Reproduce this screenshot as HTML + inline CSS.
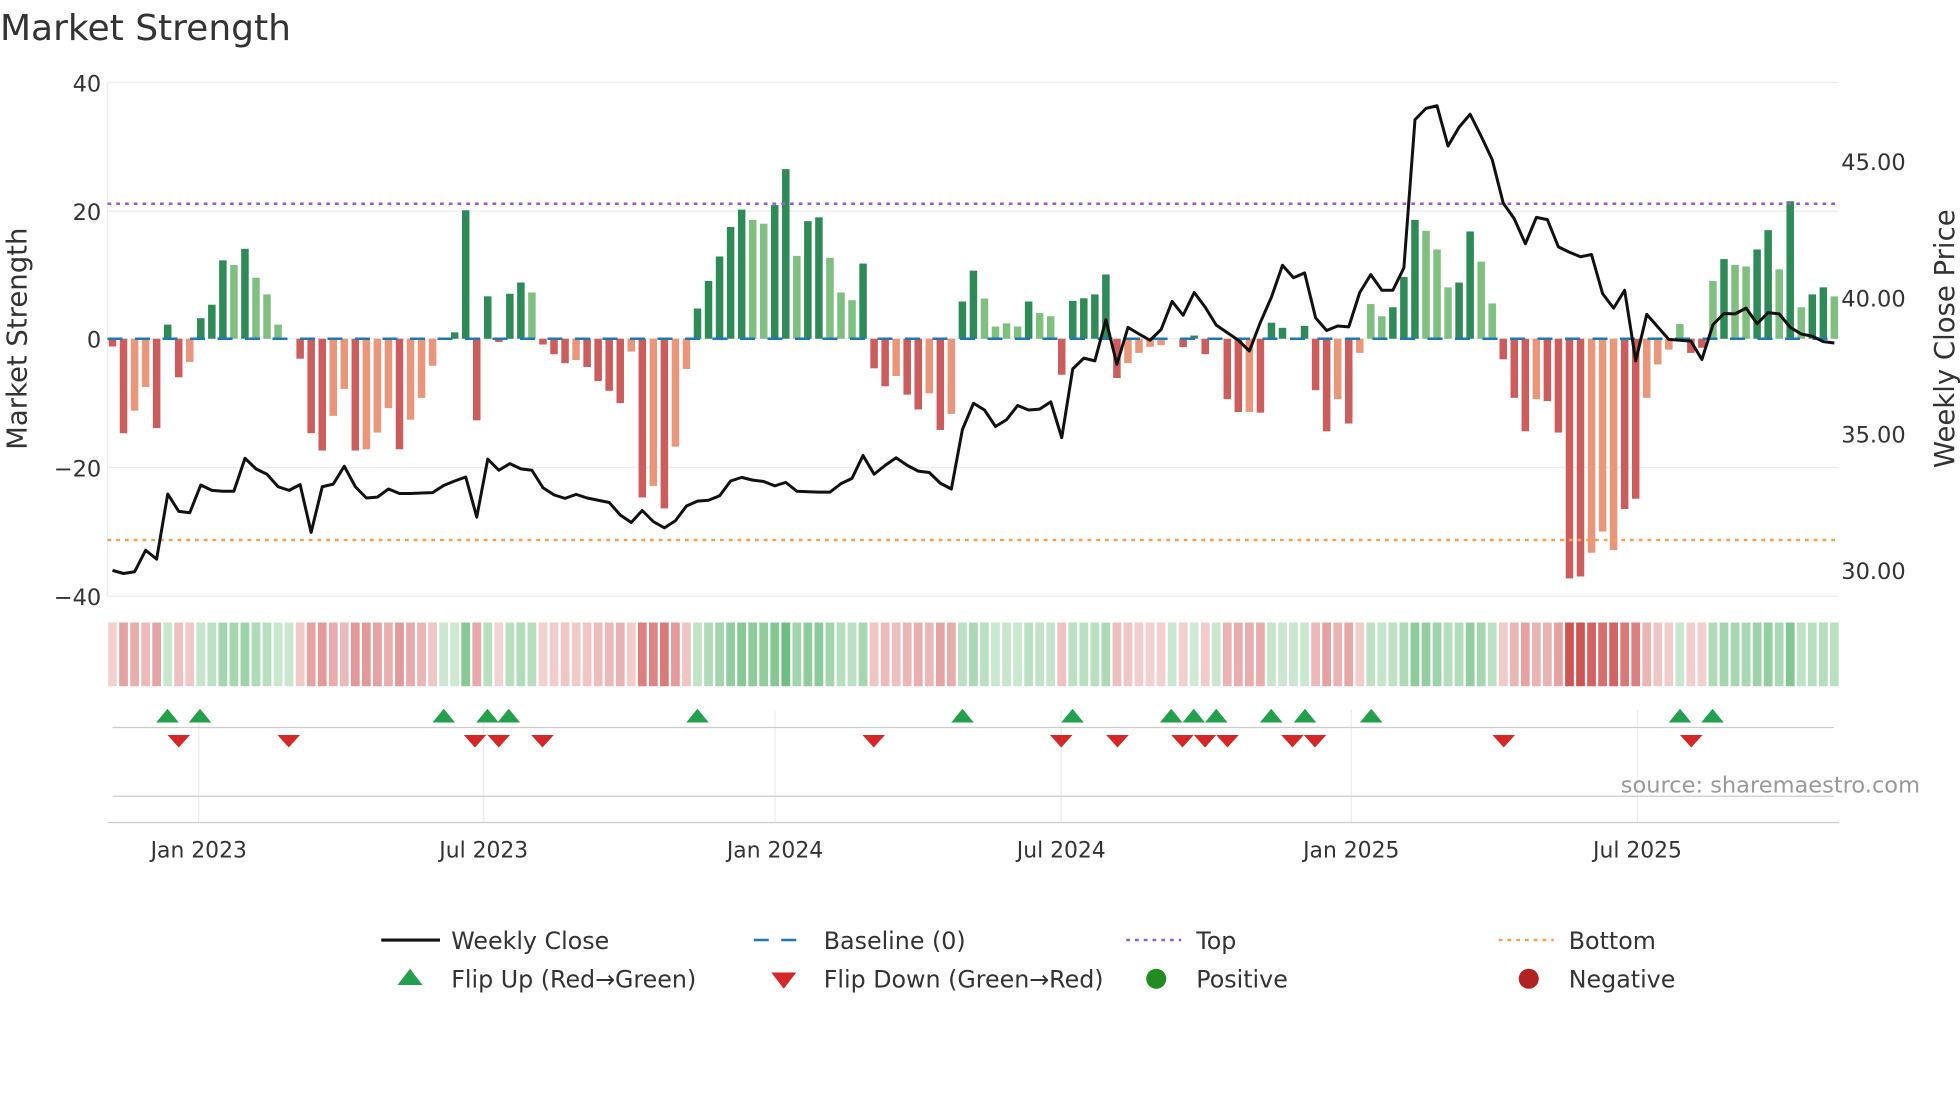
<!DOCTYPE html>
<html><head><meta charset="utf-8"><style>
html,body{margin:0;padding:0;background:#fff;width:1960px;height:1102px;overflow:hidden}
svg{display:block}
text{font-family:"DejaVu Sans","Liberation Sans",sans-serif;fill:#333}
</style></head><body>
<svg id="s" width="1960" height="1102" viewBox="0 0 1568 881.6" xmlns="http://www.w3.org/2000/svg">
<text x="0" y="32" font-size="28.8" fill="#333">Market Strength</text>
<g stroke="#ececec" stroke-width="1">
<line x1="86" x2="1471" y1="66" y2="66"/><line x1="86" x2="1471" y1="169" y2="169"/><line x1="86" x2="1471" y1="271" y2="271"/><line x1="86" x2="1471" y1="374" y2="374"/><line x1="86" x2="1471" y1="477" y2="477"/>
<line x1="86" x2="86" y1="66" y2="477"/>
<line x1="159" x2="159" y1="568" y2="658"/><line x1="387" x2="387" y1="568" y2="658"/><line x1="620" x2="620" y1="568" y2="658"/><line x1="849" x2="849" y1="568" y2="658"/><line x1="1081" x2="1081" y1="568" y2="658"/><line x1="1310" x2="1310" y1="568" y2="658"/>
</g>
<line x1="90" x2="1467" y1="582" y2="582" stroke="#ccc"/>
<line x1="90" x2="1467" y1="637" y2="637" stroke="#ccc"/>
<line x1="86" x2="1471" y1="658" y2="658" stroke="#ccc"/>
<g font-size="18" text-anchor="end">
<text x="81" y="73">40</text><text x="81" y="176">20</text><text x="81" y="278">0</text><text x="81" y="381">−20</text><text x="81" y="484">−40</text>
</g>
<g font-size="18">
<text x="1473" y="136">45.00</text><text x="1473" y="245">40.00</text><text x="1473" y="354">35.00</text><text x="1473" y="463">30.00</text>
</g>
<text font-size="22" transform="translate(21,271) rotate(-90)" text-anchor="middle">Market Strength</text>
<text font-size="22" transform="translate(1563,271) rotate(-90)" text-anchor="middle">Weekly Close Price</text>
<g id="bars"></g>
<line x1="86" x2="1471" y1="271" y2="271" stroke="#1f77b4" stroke-width="2" stroke-dasharray="12,10"/>
<line x1="86" x2="1471" y1="163" y2="163" stroke="#9b59d6" stroke-width="2" stroke-dasharray="3,4"/>
<line x1="86" x2="1471" y1="432" y2="432" stroke="#f0a050" stroke-width="2" stroke-dasharray="3,4"/>
<polyline id="price" fill="none" stroke="#111" stroke-width="2.4" stroke-linejoin="round"/>
<g id="strip"></g>
<g id="flips"></g>
<text x="1536" y="634" font-size="18" text-anchor="end" style="fill:#999">source: sharemaestro.com</text>
<g font-size="17.5" text-anchor="middle">
<text x="159" y="686">Jan 2023</text><text x="387" y="686">Jul 2023</text><text x="620" y="686">Jan 2024</text><text x="849" y="686">Jul 2024</text><text x="1081" y="686">Jan 2025</text><text x="1310" y="686">Jul 2025</text>
</g>
<g font-size="19">
<line x1="305" x2="352" y1="752" y2="752" stroke="#111" stroke-width="2.5"/><text x="361" y="759">Weekly Close</text>
<line x1="603" x2="646" y1="752" y2="752" stroke="#1f77b4" stroke-width="2" stroke-dasharray="12,10"/><text x="659" y="759">Baseline (0)</text>
<line x1="901" x2="945" y1="752" y2="752" stroke="#9b59d6" stroke-width="2" stroke-dasharray="3,4"/><text x="957" y="759">Top</text>
<line x1="1199" x2="1243" y1="752" y2="752" stroke="#f0a050" stroke-width="2" stroke-dasharray="3,4"/><text x="1255" y="759">Bottom</text>
<polygon points="318,788 338,788 328,775" fill="#22a04b"/><text x="361" y="790">Flip Up (Red→Green)</text>
<polygon points="617,778 637,778 627,791" fill="#d62728"/><text x="659" y="790">Flip Down (Green→Red)</text>
<circle cx="925" cy="783" r="8" fill="#228b22"/><text x="957" y="790">Positive</text>
<circle cx="1223" cy="783" r="8" fill="#b22222"/><text x="1255" y="790">Negative</text>
</g>
</svg>
<script>
var v=[-1.2,-14.7,-11.2,-7.5,-13.9,2.2,-6,-3.6,3.2,5.3,12.2,11.5,14,9.5,6.9,2.2,0,-3.1,-14.7,-17.4,-12,-7.8,-17.4,-17.2,-14.6,-10.8,-17.2,-12.6,-9.2,-4.2,0,1,20,-12.7,6.6,-0.5,7,8.75,7.2,-0.9,-2.4,-3.8,-3.3,-4.4,-6.6,-8.1,-10,-2,-24.7,-22.9,-26.4,-16.8,-4.7,4.7,9,12.8,17.4,20.1,18.5,17.9,20.8,26.4,12.9,18.3,18.9,12.6,7.2,6,11.7,-4.6,-7.4,-5.8,-8.7,-11,-8.5,-14.2,-11.7,5.8,10.6,
6.25,1.9,2.4,1.9,5.8,4,3.5,-5.6,5.9,6.3,6.9,10,-6.1,-3.8,-2.2,-1.25,-1,0,-1.3,0.5,-2.4,0,-9.4,-11.4,-11.4,-11.5,2.5,1.7,0,2,-8,-14.4,-9.4,-13.2,-2.2,5.4,3.5,4.9,9.6,18.5,16.8,13.9,8,8.75,16.7,12,5.5,-3.2,-9.2,-14.4,-9.4,-9.7,-14.6,-37.3,-37,-33.3,-30,-32.9,-26.5,-24.9,-9.2,-4,-1.7,2.3,-2.2,-1.4,9,12.4,11.5,11.25,13.9,16.9,10.8,21.4,4.9,6.9,8,6.6];
var light={2:1,3:1,7:1,11:1,13:1,14:1,15:1,20:1,21:1,23:1,24:1,25:1,27:1,28:1,29:1,38:1,42:1,47:1,49:1,51:1,52:1,58:1,59:1,62:1,65:1,66:1,67:1,71:1,74:1,76:1,
79:1,80:1,81:1,82:1,84:1,85:1,92:1,93:1,94:1,95:1,103:1,107:1,111:1,113:1,114:1,115:1,119:1,120:1,121:1,124:1,125:1,129:1,134:1,135:1,136:1,139:1,140:1,141:1,142:1,145:1,147:1,148:1,151:1,153:1,156:1};
var p=[1277,1284,1280,1232,1252,1106,1145,1148,1086,1098,1100,1100,1026,1050,1062,1090,1098,1085,1192,1090,1084,1044,1090,1115,1113,1095,1105,1105,1104,1103,1087,1077,1068,1158,1028,1053,1038,1050,1053,1092,1108,1116,1107,1115,1120,1125,1153,1170,1143,1168,1182,1166,1133,1122,1120,1110,1077,1069,1075,1078,1088,1080,1100,1101,1102,1102,1083,1071,1020,1062,1042,1025,1042,1055,1058,1082,1095,962,903,
918,955,940,908,918,916,900,980,826,802,808,716,816,733,748,762,738,675,706,655,688,728,745,762,786,722,665,594,622,611,712,740,730,732,655,615,650,650,600,268,243,237,327,285,256,305,358,455,490,546,487,492,553,565,575,570,658,690,650,808,704,732,760,762,764,805,727,702,703,690,725,700,703,733,748,753,765,768];
var NS="http://www.w3.org/2000/svg";
function el(t,a,par){var e=document.createElementNS(NS,t);for(var k in a)e.setAttribute(k,a[k]);document.getElementById(par).appendChild(e);return e;}
var step=(1467.5-90)/(v.length-1);
var pts=[];
for(var i=0;i<v.length;i++){
 var x=90+i*step,val=v[i],h=Math.abs(val)*5.14,lt=light[i];
 var c=val>=0?(lt?"#7fbf7f":"#2e8b57"):(lt?"#e9967a":"#cd5c5c");
 if(Math.abs(val)>0.05) el("rect",{x:x-3,y:val>=0?271-h:271,width:6,height:h,fill:c},"bars");
 var a=0.22+Math.min(Math.abs(val),37)/37*0.65;
 var sc=val>=0?"rgba(46,160,70,"+a+")":"rgba(200,60,60,"+a+")";
 if(Math.abs(val)<0.05) sc="rgba(46,160,70,0.25)";
 el("rect",{x:x-3.5,y:498,width:7,height:51,fill:sc},"strip");
 pts.push(x.toFixed(1)+","+(66+(p[i]-185)/2.798).toFixed(1));
}
document.getElementById("price").setAttribute("points",pts.join(" "));
[134,160,355,390,407,558,770,858,937,955,973,1017,1044,1097,1344,1370].forEach(function(x){el("polygon",{points:(x-9)+",578 "+(x+9)+",578 "+x+",567",fill:"#22a04b"},"flips");});
[143,231,380,399,434,699,849,894,946,964,982,1034,1052,1203,1353].forEach(function(x){el("polygon",{points:(x-9)+",588 "+(x+9)+",588 "+x+",598",fill:"#d62728"},"flips");});
</script>
</body></html>
